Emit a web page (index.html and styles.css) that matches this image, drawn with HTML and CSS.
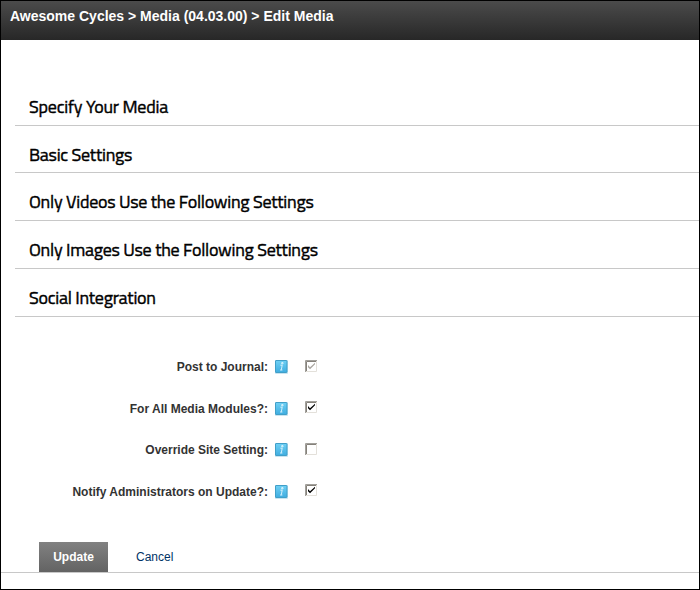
FILE: index.html
```html
<!DOCTYPE html>
<html lang="en">
<head>
<meta charset="utf-8">
<title>Edit Media</title>
<link rel="stylesheet" href="styles.css">
</head>
<body>
<svg class="defs" aria-hidden="true">
  <defs>
    <linearGradient id="blue" x2="0" y2="1"><stop stop-color="#6fd0f4"/><stop offset="1" stop-color="#3fade0"/></linearGradient>
    <symbol id="info" viewBox="0 0 13 14">
      <rect x="0" y="0" width="13" height="14" rx="1" fill="#c9e4f0"/>
      <rect x="0.5" y="0.5" width="11.5" height="12" rx="0.5" fill="url(#blue)" stroke="#419fc8"/>
      <path d="M6.7 2.6h1.3v1.3H6.7zM5.4 5.2h1.8L6.3 9.8M5.1 10h2.3" fill="none" stroke="#e5f7fe" stroke-width=".9"/>
    </symbol>
    <symbol id="box" viewBox="0 0 13 13">
      <path d="M0 0h13v13H0z" fill="#fff"/>
      <path d="M.5 12V.5H12" fill="none" stroke="#a2a09b"/>
      <path d="M1.5 11V1.5H11" fill="none" stroke="#85817a"/>
      <path d="M1 11.5h10.5V1" fill="none" stroke="#e3e0da"/>
    </symbol>
    <symbol id="tick" viewBox="0 0 13 13">
      <path d="M3 5v2.2l2 2 5-5V2.7l-5 4.5z" fill="currentColor"/>
    </symbol>
  </defs>
</svg>
<header class="titlebar">Awesome Cycles &gt; Media (04.03.00) &gt; Edit Media</header>
<main>
  <div class="sections">
    <h2><span class="specify">Specify Your Media</span></h2>
    <h2 class="short"><span>Basic Settings</span></h2>
    <h2><span>Only Videos Use the Following Settings</span></h2>
    <h2><span>Only Images Use the Following Settings</span></h2>
    <h2><span>Social Integration</span></h2>
  </div>
  <div class="fields">
    <div class="field"><span class="label">Post to Journal:</span><svg class="info"><use href="#info"/></svg><svg class="check disabled"><use href="#box"/><use href="#tick"/></svg></div>
    <div class="field"><span class="label lower">For All Media Modules?:</span><svg class="info lower"><use href="#info"/></svg><svg class="check"><use href="#box"/><use href="#tick"/></svg></div>
    <div class="field"><span class="label">Override Site Setting:</span><svg class="info"><use href="#info"/></svg><svg class="check"><use href="#box"/></svg></div>
    <div class="field"><span class="label">Notify Administrators on Update?:</span><svg class="info"><use href="#info"/></svg><svg class="check raised"><use href="#box"/><use href="#tick"/></svg></div>
  </div>
  <div class="actions"><button class="update" type="button">Update</button><a class="cancel">Cancel</a></div>
</main>
</body>
</html>
```
FILE: styles.css
```css
* { box-sizing: border-box; }
body {
  margin: 0;
  height: 590px;
  border: 1px solid #000;
  background: #fff;
  font: 12px "Liberation Sans", Arial, sans-serif;
  overflow: hidden;
}
.defs { display: block; width: 0; height: 0; }
.titlebar {
  height: 39px;
  padding: 7px 9px;
  color: #fff;
  background: linear-gradient(#4b4b4b, #272727);
  font-size: 14px;
  font-weight: bold;
  line-height: 16px;
}
.sections { margin: 38px 0 0 14px; }
h2 {
  height: 48px;
  margin: 0;
  padding: 17px 0 0 14px;
  border-bottom: 1px solid #c8c8c8;
  color: #000;
  font: 500 18px/24px "Titillium Web", Roboto, sans-serif;
  letter-spacing: -0.27px;
  -webkit-text-stroke: 0.4px #000;
  white-space: nowrap;
}
h2.short { height: 47px; }
.specify { letter-spacing: -0.22px; }
.fields { margin-top: 29px; }
.field { display: flex; align-items: center; height: 41.6px; }
.label {
  width: 267px;
  color: #333;
  font-weight: bold;
  line-height: 16px;
  text-align: right;
  white-space: nowrap;
}
.info { width: 13px; height: 14px; margin-left: 7px; }
.lower { margin-top: 1px; }
.check { width: 13px; height: 13px; margin: 0 0 1px 17px; color: #000; }
.check.disabled { color: #a8a59f; }
.check.raised { margin-bottom: 2px; }
.actions {
  display: flex;
  align-items: center;
  height: 31px;
  margin-top: 30px;
  padding-left: 38px;
  border-bottom: 1px solid #c8c8c8;
}
.update {
  width: 69px;
  height: 30px;
  padding: 0;
  border: 0;
  color: #fff;
  background: linear-gradient(#818181, #636363);
  font: bold 12px "Liberation Sans", Arial, sans-serif;
}
.cancel { margin-left: 28px; color: #036; }
```
